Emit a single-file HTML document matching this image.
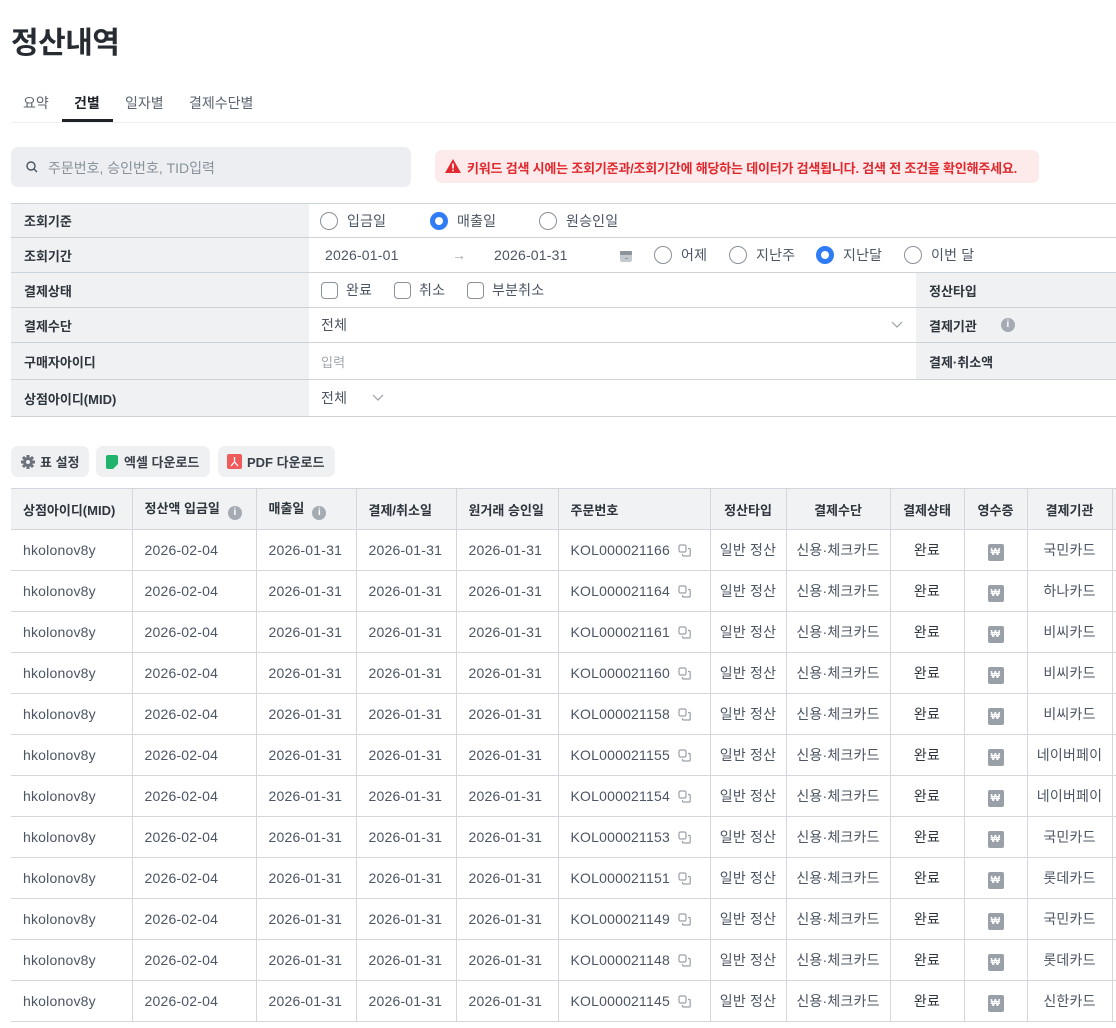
<!DOCTYPE html>
<html><head><meta charset="utf-8"><style>
*{box-sizing:border-box;margin:0;padding:0}
body{width:1116px;height:1028px;overflow:hidden;background:#fff;font-family:"Liberation Sans","Noto Sans CJK KR",sans-serif;color:#4b5563;font-size:14px;position:relative}
.abs{position:absolute}
h1{position:absolute;left:11px;top:18px;font-size:30px;font-weight:700;color:#272c33;letter-spacing:-0.5px}
.tabs{position:absolute;left:11px;top:84px;width:1105px;height:39px;border-bottom:1px solid #eceef0}
.tab{position:absolute;top:9px;font-size:14px;color:#5b6470}
.tab.on{color:#1f2329;font-weight:700}
.search{position:absolute;left:11px;top:147px;width:400px;height:40px;background:#eceef1;border-radius:7px}
.search span{position:absolute;left:37px;top:11px;color:#8a919b;font-size:14px}
.warn{position:absolute;left:435px;top:150px;width:604px;height:33px;background:#fdeaea;border-radius:7px;color:#e0282e;font-size:13px;font-weight:700;padding:8px 0 0 32px;letter-spacing:-0.2px}
.frow{position:absolute;left:11px;width:1105px;border-bottom:1px solid #ced3d8}
.lab{position:absolute;left:0;top:0;bottom:0;width:298px;background:#f0f1f3;padding-left:13px;font-weight:700;color:#2f353d;font-size:13px;display:flex;align-items:center}
.rlab{position:absolute;left:905px;top:0;bottom:0;right:0;background:#f0f1f3;padding-left:13px;font-weight:700;color:#2f353d;font-size:13px;display:flex;align-items:center}
.it{position:absolute;top:0;bottom:0;display:flex;align-items:center;font-size:14px;color:#4b5563;letter-spacing:0.2px}
.rad{width:18px;height:18px;border:1.5px solid #8b9199;border-radius:50%;display:inline-block;margin-right:9px}
.rad.on{border:5px solid #2f7cf6;background:#fff}
.chk{width:17px;height:17px;border:1.5px solid #8b9199;border-radius:4px;display:inline-block;margin-right:8px}
.btn{position:absolute;top:446px;height:31px;background:#eff0f2;border-radius:7px;font-size:13px;font-weight:700;color:#3a4048;display:flex;align-items:center;padding-left:10px}
table{position:absolute;left:11px;top:488px;border-collapse:collapse;table-layout:fixed;width:1190px}
th,td{height:41px;border:1px solid #d3d7dc;font-size:14px;white-space:nowrap;overflow:hidden;padding:0 12px;text-align:left;letter-spacing:0.2px}
th{background:#f1f2f4;color:#2f353d;font-weight:700;font-size:13px;border-top:1px solid #d3d7dc;letter-spacing:0}
td{color:#4b5563}
tr>*:first-child{border-left:none}
.c{text-align:center;padding:0}
.ic{display:inline-block;width:14px;height:14px;border-radius:50%;background:#a5abb3;color:#fff;font-size:10px;line-height:14px;text-align:center;vertical-align:-2px;margin-left:8px;font-weight:700}
.cp{display:inline-block;vertical-align:-2px;margin-left:8px}
.won{display:inline-block;width:16px;height:17px;background:#9aa0a8;border-radius:2px;color:#fff;font-size:10px;line-height:17px;text-align:center;font-weight:700;vertical-align:-3px}
</style></head><body>
<h1>정산내역</h1>
<div class="tabs">
<span class="tab" style="left:12px">요약</span>
<span class="tab on" style="left:63px">건별</span>
<span class="tab" style="left:114px">일자별</span>
<span class="tab" style="left:178px">결제수단별</span>
<div class="abs" style="left:51px;top:35px;width:51px;height:3px;background:#1f2329"></div>
</div>
<div class="search"><svg class="abs" style="left:15px;top:14px" width="12" height="12" viewBox="0 0 12 12"><circle cx="5" cy="5" r="4" fill="none" stroke="#4b5563" stroke-width="1.4"/><path d="M8 8l3 3" stroke="#4b5563" stroke-width="1.4"/></svg><span>주문번호, 승인번호, TID입력</span></div>
<div class="warn"><svg class="abs" style="left:10px;top:9px" width="16" height="14" viewBox="0 0 16 14"><path d="M8 0L16 14H0Z" fill="#e0282e"/><rect x="7.2" y="4.5" width="1.6" height="5" fill="#fff"/><rect x="7.2" y="10.7" width="1.6" height="1.6" fill="#fff"/></svg>키워드 검색 시에는 조회기준과/조회기간에 해당하는 데이터가 검색됩니다. 검색 전 조건을 확인해주세요.</div>

<div class="frow" style="top:203px;height:35px;border-top:1px solid #ced3d8"><div class="lab">조회기준</div>
<div class="it" style="left:309px"><span class="rad"></span>입금일</div>
<div class="it" style="left:419px"><span class="rad on"></span>매출일</div>
<div class="it" style="left:528px"><span class="rad"></span>원승인일</div></div>
<div class="frow" style="top:238px;height:35px"><div class="lab">조회기간</div>
<div class="it" style="left:314px">2026-01-01</div>
<div class="it" style="left:441px;color:#a0a6ad">→</div>
<div class="it" style="left:483px">2026-01-31</div>
<div class="it" style="left:609px"><svg width="12" height="13" viewBox="0 0 12 13"><rect x="0" y="2" width="12" height="11" rx="2" fill="#c5cad0"/><rect x="0" y="2" width="12" height="4" rx="1" fill="#8c939b"/><rect x="5" y="9" width="3" height="1" fill="#8c939b"/></svg></div>
<div class="it" style="left:643px"><span class="rad"></span>어제</div>
<div class="it" style="left:718px"><span class="rad"></span>지난주</div>
<div class="it" style="left:805px"><span class="rad on"></span>지난달</div>
<div class="it" style="left:893px"><span class="rad"></span>이번 달</div></div>
<div class="frow" style="top:273px;height:35px"><div class="lab">결제상태</div>
<div class="it" style="left:310px"><span class="chk"></span>완료</div>
<div class="it" style="left:383px"><span class="chk"></span>취소</div>
<div class="it" style="left:456px"><span class="chk"></span>부분취소</div>
<div class="rlab">정산타입</div></div>
<div class="frow" style="top:308px;height:35px"><div class="lab">결제수단</div>
<div class="it" style="left:310px">전체</div>
<div class="it" style="left:880px"><svg width="12" height="8" viewBox="0 0 12 8"><path d="M1 1l5 5 5-5" fill="none" stroke="#9aa0a8" stroke-width="1.2"/></svg></div>
<div class="rlab">결제기관<span class="ic" style="margin-left:24px">i</span></div></div>
<div class="frow" style="top:343px;height:37px"><div class="lab">구매자아이디</div>
<div class="it" style="left:310px;color:#a0a6ad;font-size:13px">입력</div>
<div class="rlab">결제·취소액</div></div>
<div class="frow" style="top:380px;height:37px"><div class="lab">상점아이디(MID)</div>
<div class="it" style="left:310px">전체</div>
<div class="it" style="left:361px"><svg width="12" height="8" viewBox="0 0 12 8"><path d="M1 1l5 5 5-5" fill="none" stroke="#9aa0a8" stroke-width="1.2"/></svg></div></div>

<div class="btn" style="left:11px;width:78px"><svg width="14" height="14" viewBox="0 0 14 14" style="margin-right:5px"><circle cx="7" cy="7" r="5" fill="#6b727b"/><g stroke="#6b727b" stroke-width="3"><path d="M7 0v14M0 7h14M2 2l10 10M12 2L2 12"/></g><circle cx="7" cy="7" r="2" fill="#eff0f2"/></svg>표 설정</div>
<div class="btn" style="left:96px;width:114px"><svg width="12" height="14" viewBox="0 0 12 14" style="margin-right:6px"><path d="M2 0h8a2 2 0 0 1 2 2v7l-5 5H2a2 2 0 0 1-2-2V2a2 2 0 0 1 2-2z" fill="#1fb36b"/></svg>엑셀 다운로드</div>
<div class="btn" style="left:218px;width:117px;padding-left:9px"><svg width="15" height="15" viewBox="0 0 15 15" style="margin-right:5px"><rect width="15" height="15" rx="2" fill="#ef5b5b"/><path d="M7.5 3v5M4 12l3.5-4 3.5 4" fill="none" stroke="#fff" stroke-width="1.3"/></svg>PDF 다운로드</div>

<table>
<colgroup><col style="width:121px"><col style="width:124px"><col style="width:100px"><col style="width:100px"><col style="width:102px"><col style="width:152px"><col style="width:76px"><col style="width:104px"><col style="width:74px"><col style="width:63px"><col style="width:85px"><col style="width:89px"></colgroup>
<tr><th>상점아이디(MID)</th><th>정산액 입금일<span class="ic">i</span></th><th>매출일<span class="ic">i</span></th><th>결제/취소일</th><th>원거래 승인일</th><th>주문번호</th><th class="c">정산타입</th><th class="c">결제수단</th><th class="c">결제상태</th><th class="c">영수증</th><th class="c">결제기관</th><th></th></tr>
</table>
<script>
var o=["166","164","161","160","158","155","154","153","151","149","148","145"],b=["국민카드","하나카드","비씨카드","비씨카드","비씨카드","네이버페이","네이버페이","국민카드","롯데카드","국민카드","롯데카드","신한카드"];
var t=document.querySelector("table"),h="";
for(var i=0;i<12;i++)h+='<tr><td>hkolonov8y</td><td>2026-02-04</td><td>2026-01-31</td><td>2026-01-31</td><td>2026-01-31</td><td>KOL000021'+o[i]+'<svg class="cp" width="13" height="13" viewBox="0 0 13 13"><rect x="1" y="1" width="7" height="7" rx="1.5" fill="none" stroke="#9aa0a8" stroke-width="1.2"/><path d="M10 4.5h1.2a1 1 0 0 1 1 1V11a1 1 0 0 1-1 1H5.5a1 1 0 0 1-1-1V10" fill="none" stroke="#9aa0a8" stroke-width="1.2"/></svg></td><td class="c">일반 정산</td><td class="c">신용·체크카드</td><td class="c" style="color:#2f353d">완료</td><td class="c"><span class="won">₩</span></td><td class="c">'+b[i]+'</td><td></td></tr>';
t.insertAdjacentHTML("beforeend",h);
</script>
</body></html>
